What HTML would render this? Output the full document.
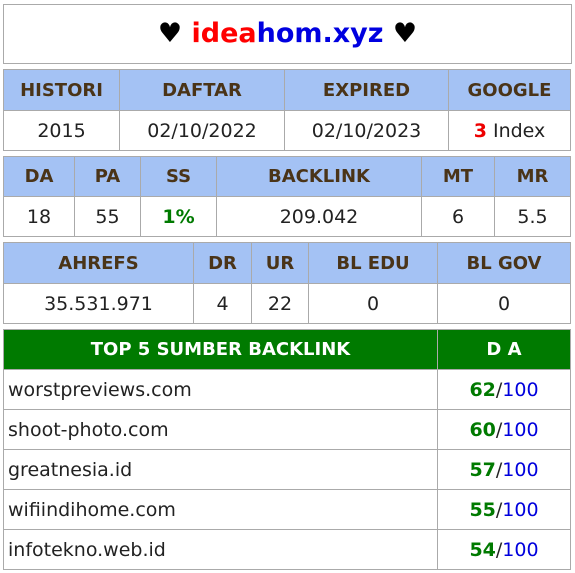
<!DOCTYPE html><html><head><style>
body{margin:0;background:#fff;font-family:"DejaVu Sans","Liberation Sans",sans-serif;}
.b{position:absolute;left:3px;width:567px;}
table{border-collapse:collapse;table-layout:fixed;width:568px;position:absolute;left:3px;}
td{border:1px solid #aaa;text-align:center;padding:0;font-size:19px;color:#222;}
tr.h td{background:#a4c2f4;color:#4a3418;font-weight:bold;font-size:18px;}
.t{top:4px;height:58px;border:1px solid #aaa;text-align:center;font-size:27px;line-height:58px;font-weight:bold;}
.g{color:#007a00;font-weight:bold}.bl{color:#0000dd}.r{color:#e00;font-weight:bold}
.t4 tr.h td{background:#007a00;color:#fff}
.t4 td.l{text-align:left;padding-left:4px;font-size:19px}
.t4 td.d{font-size:19px}
</style></head><body>
<div class="b t"><span style="color:#000">♥</span> <span style="color:#f00">idea</span><span style="color:#0000e0">hom.xyz</span> <span style="color:#000">♥</span></div>
<table style="top:69px"><colgroup><col style="width:116px"><col style="width:165px"><col style="width:164px"><col></colgroup>
<tr class="h" style="height:41px"><td>HISTORI</td><td>DAFTAR</td><td>EXPIRED</td><td>GOOGLE</td></tr>
<tr style="height:40px"><td>2015</td><td>02/10/2022</td><td>02/10/2023</td><td><span class="r">3</span> Index</td></tr></table>
<table style="top:156px"><colgroup><col style="width:71px"><col style="width:66px"><col style="width:76px"><col style="width:205px"><col style="width:73px"><col></colgroup>
<tr class="h" style="height:40px"><td>DA</td><td>PA</td><td>SS</td><td>BACKLINK</td><td>MT</td><td>MR</td></tr>
<tr style="height:40px"><td>18</td><td>55</td><td class="g">1%</td><td>209.042</td><td>6</td><td>5.5</td></tr></table>
<table style="top:242px"><colgroup><col style="width:190px"><col style="width:58px"><col style="width:57px"><col style="width:129px"><col></colgroup>
<tr class="h" style="height:41px"><td>AHREFS</td><td>DR</td><td>UR</td><td>BL EDU</td><td>BL GOV</td></tr>
<tr style="height:40px"><td>35.531.971</td><td>4</td><td>22</td><td>0</td><td>0</td></tr></table>
<table class="t4" style="top:329px"><colgroup><col style="width:434px"><col></colgroup>
<tr class="h" style="height:40px"><td>TOP 5 SUMBER BACKLINK</td><td>D A</td></tr>
<tr style="height:40px"><td class="l">worstpreviews.com</td><td class="d"><span class="g">62</span>/<span class="bl">100</span></td></tr>
<tr style="height:40px"><td class="l">shoot-photo.com</td><td class="d"><span class="g">60</span>/<span class="bl">100</span></td></tr>
<tr style="height:40px"><td class="l">greatnesia.id</td><td class="d"><span class="g">57</span>/<span class="bl">100</span></td></tr>
<tr style="height:40px"><td class="l">wifiindihome.com</td><td class="d"><span class="g">55</span>/<span class="bl">100</span></td></tr>
<tr style="height:40px"><td class="l">infotekno.web.id</td><td class="d"><span class="g">54</span>/<span class="bl">100</span></td></tr>
</table>
</body></html>
